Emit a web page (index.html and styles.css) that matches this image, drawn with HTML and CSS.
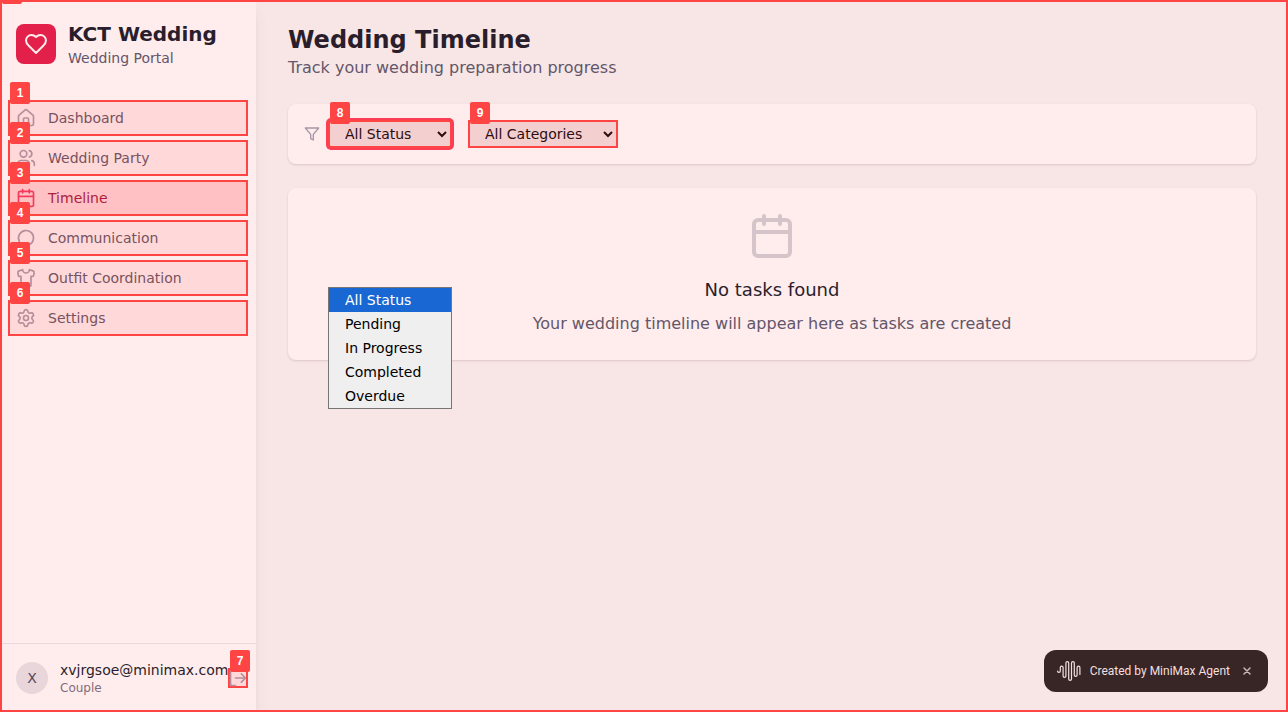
FILE: index.html
```html
<!DOCTYPE html>
<html lang="en">
<head>
<meta charset="utf-8">
<meta name="viewport" content="width=device-width, initial-scale=1">
<title>Wedding Timeline</title>
<link rel="stylesheet" href="styles.css">
</head>
<body>
<div class="app">
  <aside class="sidebar">
    <div class="brand">
      <span class="brand-mark"><svg class="icon-lg" viewBox="0 0 24 24"><path d="M19 14c1.49-1.46 3-3.21 3-5.5A5.5 5.5 0 0 0 16.5 3c-1.76 0-3 .5-4.5 2-1.5-1.5-2.74-2-4.5-2A5.5 5.5 0 0 0 2 8.5c0 2.3 1.5 4.05 3 5.5l7 7Z"/></svg></span>
      <div>
        <div class="brand-name">KCT Wedding</div>
        <div class="brand-sub">Wedding Portal</div>
      </div>
    </div>
    <nav class="nav">
      <a class="nav-item" href="#dashboard"><span class="tag">1</span><svg class="icon" viewBox="0 0 24 24"><path d="M15 21v-8a1 1 0 0 0-1-1h-4a1 1 0 0 0-1 1v8"/><path d="M3 10a2 2 0 0 1 .709-1.528l7-5.999a2 2 0 0 1 2.582 0l7 5.999A2 2 0 0 1 21 10v9a2 2 0 0 1-2 2H5a2 2 0 0 1-2-2z"/></svg>Dashboard</a>
      <a class="nav-item" href="#party"><span class="tag">2</span><svg class="icon" viewBox="0 0 24 24"><path d="M16 21v-2a4 4 0 0 0-4-4H6a4 4 0 0 0-4 4v2"/><circle cx="9" cy="7" r="4"/><path d="M22 21v-2a4 4 0 0 0-3-3.87M16 3.13a4 4 0 0 1 0 7.75"/></svg>Wedding Party</a>
      <a class="nav-item active" href="#timeline"><span class="tag">3</span><svg class="icon" viewBox="0 0 24 24"><path d="M8 2v4M16 2v4M3 10h18"/><rect x="3" y="4" width="18" height="18" rx="2"/></svg>Timeline</a>
      <a class="nav-item" href="#communication"><span class="tag">4</span><svg class="icon" viewBox="0 0 24 24"><path d="M7.9 20A9 9 0 1 0 4 16.1L2 22Z"/></svg>Communication</a>
      <a class="nav-item" href="#outfits"><span class="tag">5</span><svg class="icon" viewBox="0 0 24 24"><path d="M20.38 3.46 16 2a4 4 0 0 1-8 0L3.62 3.46a2 2 0 0 0-1.34 2.23l.58 3.47a1 1 0 0 0 .99.84H6v10c0 1.1.9 2 2 2h8a2 2 0 0 0 2-2V10h2.15a1 1 0 0 0 .99-.84l.58-3.47a2 2 0 0 0-1.34-2.23z"/></svg>Outfit Coordination</a>
      <a class="nav-item" href="#settings"><span class="tag">6</span><svg class="icon" viewBox="0 0 24 24"><path d="M9.671 4.136a2.34 2.34 0 0 1 4.659 0 2.34 2.34 0 0 0 3.319 1.915 2.34 2.34 0 0 1 2.33 4.033 2.34 2.34 0 0 0 0 3.831 2.34 2.34 0 0 1-2.33 4.033 2.34 2.34 0 0 0-3.319 1.915 2.34 2.34 0 0 1-4.659 0 2.34 2.34 0 0 0-3.32-1.915 2.34 2.34 0 0 1-2.33-4.033 2.34 2.34 0 0 0 0-3.831A2.34 2.34 0 0 1 6.35 6.051a2.34 2.34 0 0 0 3.319-1.915"/><circle cx="12" cy="12" r="3"/></svg>Settings</a>
    </nav>
    <div class="account">
      <span class="avatar">X</span>
      <div class="account-text">
        <div class="account-mail">xvjrgsoe@minimax.com</div>
        <div class="account-role">Couple</div>
      </div>
      <button class="logout" type="button" aria-label="Sign out"><span class="tag">7</span><svg class="icon" viewBox="0 0 24 24"><path d="M9 21H5a2 2 0 0 1-2-2V5a2 2 0 0 1 2-2h4M16 17l5-5-5-5M21 12H9"/></svg></button>
    </div>
  </aside>

  <main class="main">
    <header>
      <h1 class="title">Wedding Timeline</h1>
      <p class="subtitle">Track your wedding preparation progress</p>
    </header>
    <section class="card filters">
      <svg class="filter-icon" viewBox="0 0 24 24"><path d="M22 3H2l8 9.460V19l4 2v-8.540z"/></svg>
      <div class="field">
        <span class="tag">8</span>
        <select class="select focused" aria-label="Status">
          <option>All Status</option><option>Pending</option><option>In Progress</option><option>Completed</option><option>Overdue</option>
        </select>
        <ul class="menu">
          <li class="menu-item selected">All Status</li>
          <li class="menu-item">Pending</li>
          <li class="menu-item">In Progress</li>
          <li class="menu-item">Completed</li>
          <li class="menu-item">Overdue</li>
        </ul>
      </div>
      <div class="field">
        <span class="tag">9</span>
        <select class="select category" aria-label="Category">
          <option>All Categories</option>
        </select>
      </div>
    </section>
    <section class="card empty">
      <svg class="empty-icon" viewBox="0 0 24 24"><path d="M8 2v4M16 2v4M3 10h18"/><rect x="3" y="4" width="18" height="18" rx="2"/></svg>
      <h2 class="empty-title">No tasks found</h2>
      <p class="empty-text">Your wedding timeline will appear here as tasks are created</p>
    </section>
  </main>
</div>

<div class="frame"><span class="frame-tag"></span></div>

<div class="toast">
  <svg class="wave" viewBox="0 0 26 22"><path d="M1.500 11a1.400 1.400 0 0 0 2.800 0V7.500a1.400 1.400 0 0 1 2.800 0V16a1.400 1.400 0 0 0 2.800 0V3a1.400 1.400 0 0 1 2.800 0V19a1.400 1.400 0 0 0 2.800 0V3a1.400 1.400 0 0 1 2.800 0V15a1.400 1.400 0 0 0 2.800 0V7.500a1.400 1.400 0 0 1 2.800 0V14.500"/></svg>
  <span>Created by MiniMax Agent</span>
  <button class="toast-close" type="button" aria-label="Close"><svg viewBox="0 0 10 10"><path d="M2 2l6 6M8 2l-6 6"/></svg></button>
</div>
</body>
</html>
```
FILE: styles.css
```css
* { box-sizing: border-box; margin: 0; }

body {
  background: #f8e6e6;
  color: #2a1e2c;
  font: 14px/20px "DejaVu Sans", sans-serif;
}

svg {
  flex: none;
  fill: none;
  stroke: currentColor;
  stroke-width: 2;
  stroke-linecap: round;
  stroke-linejoin: round;
}

.icon { width: 20px; height: 20px; color: #b48e9b; }
.icon-lg { width: 24px; height: 24px; }

.app { display: flex; min-height: 100vh; }

.sidebar {
  display: flex;
  flex-direction: column;
  flex: none;
  width: 256px;
  background: #ffecec;
  box-shadow: 0 10px 15px -3px rgba(80, 20, 30, 0.1), 0 4px 6px -4px rgba(80, 20, 30, 0.1);
}

.brand { display: flex; align-items: center; gap: 12px; padding: 20px 16px; }
.brand-mark {
  display: grid;
  place-items: center;
  width: 40px;
  height: 40px;
  border-radius: 8px;
  background: #e22049;
  color: #ffecec;
}
.brand-name { font-size: 20px; line-height: 28px; font-weight: 700; }
.brand-sub { color: #63566a; }

.nav { display: flex; flex-direction: column; gap: 4px; padding: 12px 8px; }
.nav-item {
  position: relative;
  display: flex;
  align-items: center;
  gap: 12px;
  height: 36px;
  padding: 0 6px;
  border: 2px solid #ff4444;
  background: #ffd9d9;
  color: #775260;
  text-decoration: none;
}
.nav-item.active { background: #ffc1c4; color: #ab1e3e; }
.nav-item.active .icon { color: #f53a5c; }

.tag {
  position: absolute;
  z-index: 2;
  left: 0;
  top: -20px;
  width: 20px;
  height: 22px;
  border-radius: 2px;
  background: #ff4444;
  color: #fff;
  font: 700 12px/22px "Liberation Sans", sans-serif;
  text-align: center;
}

.account {
  display: flex;
  align-items: center;
  margin-top: auto;
  padding: 16px 8px 16px 16px;
  border-top: 1px solid #e8d7dc;
}
.avatar {
  display: grid;
  place-items: center;
  flex: none;
  width: 32px;
  height: 32px;
  margin-right: 12px;
  border-radius: 50%;
  background: #e8d6da;
  color: #55485a;
}
.account-text { flex: 1; min-width: 0; }
.account-role { color: #7f6d7c; font-size: 12px; line-height: 16px; }
.logout {
  position: relative;
  display: grid;
  place-content: center;
  flex: none;
  width: 20px;
  height: 20px;
  padding: 0;
  border: 2px solid #ff4444;
  background: #ffd9d9;
  color: #b48e9b;
}

.main { flex: 1; min-width: 0; padding: 24px 32px; }
.title { font-size: 24px; line-height: 32px; }
.subtitle { color: #63566a; font-size: 16px; line-height: 24px; }

.card {
  margin-top: 24px;
  border-radius: 8px;
  background: #ffecec;
  box-shadow: 0 1px 3px rgba(80, 20, 30, 0.1), 0 1px 2px rgba(80, 20, 30, 0.06);
}
.filters { display: flex; align-items: center; gap: 16px; padding: 16px; }
.filter-icon { width: 16px; height: 16px; margin-right: -8px; color: #a595a7; }
.field { position: relative; display: flex; }
.field .tag { left: 2px; top: -18px; }
.select {
  height: 28px;
  padding: 2px 11px;
  border: 2px solid #ff4444;
  border-radius: 0;
  background: #f3cfcf;
  color: #2d0d10;
  font: inherit;
}
.category { width: 150px; }
.focused { outline: none; border-radius: 3px; box-shadow: 0 0 0 2px #fb3d55; }
.menu {
  position: absolute;
  z-index: 3;
  top: 167px;
  left: 0;
  width: 100%;
  padding: 0;
  border: 1px solid #767676;
  background: #efefef;
  color: #000;
  list-style: none;
}
.menu-item { padding: 2px 16px; white-space: nowrap; }
.menu-item.selected { background: #1967d2; color: #fff; }

.empty {
  display: flex;
  flex-direction: column;
  align-items: center;
  padding: 24px;
  text-align: center;
}
.empty-icon { width: 48px; height: 48px; color: #d5c5ca; }
.empty-title { margin-top: 16px; font-size: 18px; line-height: 28px; font-weight: 400; }
.empty-text { margin-top: 8px; color: #63566a; font-size: 16px; line-height: 24px; }

.frame {
  position: fixed;
  z-index: 5;
  inset: 0;
  overflow: hidden;
  border: 2px solid #ff4444;
  pointer-events: none;
}
.frame-tag {
  position: absolute;
  left: 0;
  top: -20px;
  width: 20px;
  height: 22px;
  border-radius: 2px;
  background: #ff4444;
}

.toast {
  position: fixed;
  z-index: 4;
  right: 20px;
  bottom: 20px;
  display: flex;
  align-items: center;
  height: 42px;
  padding: 0 14px 0 12px;
  border-radius: 12px;
  background: #382626;
  color: #f3dfdf;
  font: 12px/20px Roboto, sans-serif;
}
.wave { width: 26px; height: 22px; margin-right: 8px; stroke-width: 1.2; }
.toast-close {
  display: grid;
  place-items: center;
  width: 14px;
  height: 14px;
  margin-left: 10px;
  padding: 0;
  border: 0;
  background: none;
  color: #c9b5b5;
}
.toast-close svg { width: 10px; height: 10px; stroke-width: 1.5; }
```
